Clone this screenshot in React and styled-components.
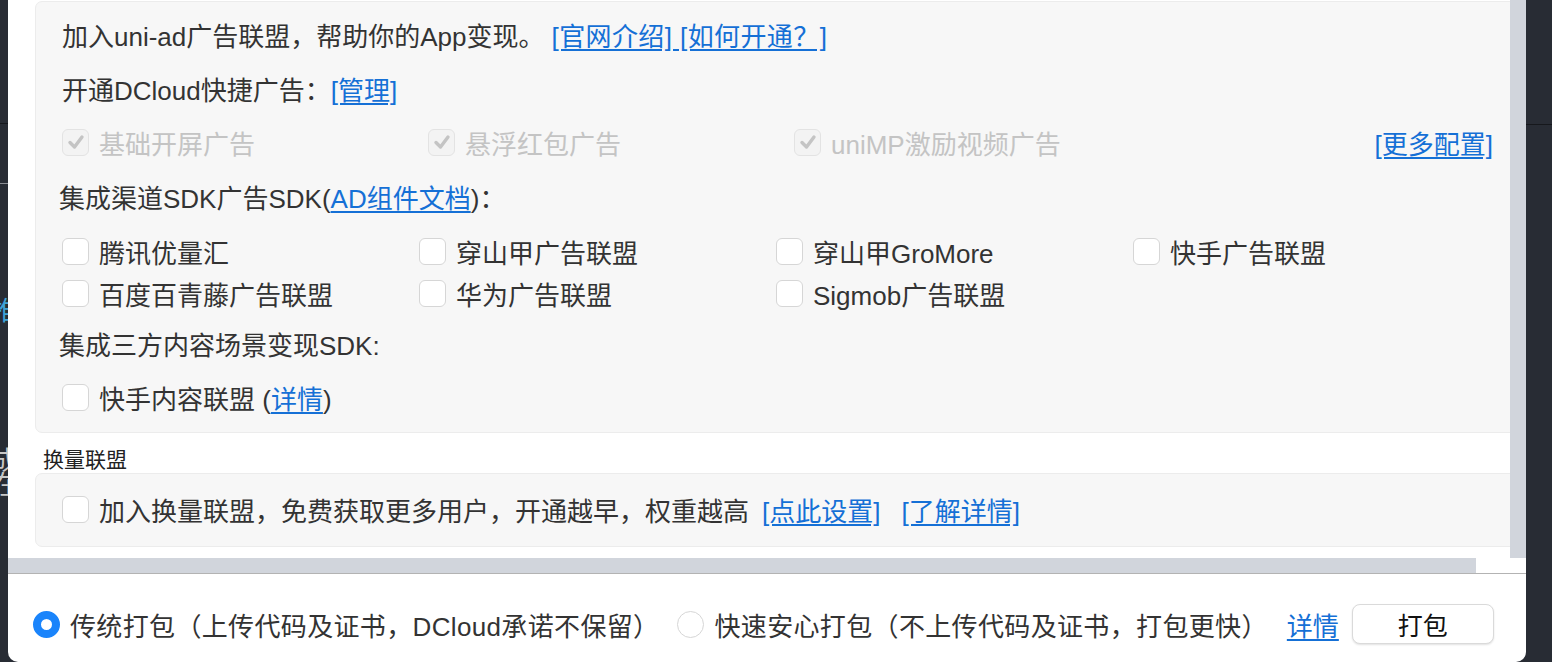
import React from "react";
import styled, { createGlobalStyle } from "styled-components";

const GlobalStyle = createGlobalStyle`
  html, body {
    margin: 0;
    padding: 0;
    background: #282c34;
  }
  body {
    font-family: "Liberation Sans", "Noto Sans CJK SC", sans-serif;
    color: #333;
  }
`;

const LINK = "#1570d6";

function CheckBox({ checked, disabled }) {
  return (
    <Box $disabled={disabled}>
      {checked && (
        <svg width="20" height="20" viewBox="0 0 20 20">
          <path
            d="M4 10.5 L8.5 15 L16 5"
            fill="none"
            stroke="#c4c4c4"
            strokeWidth="3.4"
            strokeLinecap="round"
            strokeLinejoin="round"
          />
        </svg>
      )}
    </Box>
  );
}

function Option({ label, checked, disabled, children }) {
  return (
    <OptionItem $disabled={disabled}>
      <CheckBox checked={checked} disabled={disabled} />
      <span>
        {label}
        {children}
      </span>
    </OptionItem>
  );
}

const sdkList = [
  "腾讯优量汇",
  "穿山甲广告联盟",
  "穿山甲GroMore",
  "快手广告联盟",
  "百度百青藤广告联盟",
  "华为广告联盟",
  "Sigmob广告联盟",
];

function App() {
  return (
    <>
      <GlobalStyle />
      <Page>
        <Strip $width="8px">
          <Rule $top="123px" $color="#16181c" />
          <Rule $top="59px" $color="#8a8d93" />
          <Fragment $top="112px" $color="#3fa2d6">推</Fragment>
          <Fragment $top="120px" $color="#c8c8c8">成</Fragment>
          <Fragment $top="-6px" $color="#c8c8c8">在</Fragment>
        </Strip>

        <Dialog>
          <ScrollFrame>
            <Viewport>
              <Content>
                <Card $top="1px" $pad="5px 36px 8px 26px">
                  <Line>
                    加入uni-ad广告联盟，帮助你的App变现。
                    <IntroLink>[官网介绍] [如何开通？]</IntroLink>
                  </Line>
                  <Line>
                    开通DCloud快捷广告：<Link>[管理]</Link>
                  </Line>
                  <Line>
                    <DisabledCell>
                      <Option label="基础开屏广告" checked disabled />
                    </DisabledCell>
                    <DisabledCell>
                      <Option label="悬浮红包广告" checked disabled />
                    </DisabledCell>
                    <DisabledCell>
                      <Option label="uniMP激励视频广告" checked disabled />
                    </DisabledCell>
                    <MoreLink>[更多配置]</MoreLink>
                  </Line>
                  <Line $shift="-3px">
                    集成渠道SDK广告SDK(<Link>AD组件文档</Link>)：
                  </Line>
                  <SdkGrid>
                    {sdkList.map((name) => (
                      <Option key={name} label={name} />
                    ))}
                  </SdkGrid>
                  <Line $shift="-3px">集成三方内容场景变现SDK:</Line>
                  <Line>
                    <Option label="快手内容联盟 (">
                      <Link>详情</Link>)
                    </Option>
                  </Line>
                </Card>

                <SectionLabel>换量联盟</SectionLabel>
                <Card $top="0" $pad="0 36px 0 26px">
                  <SwapRow>
                    <Option label="加入换量联盟，免费获取更多用户，开通越早，权重越高" />
                    <SwapLinks>
                      <Link>[点此设置]</Link>
                      <Link>[了解详情]</Link>
                    </SwapLinks>
                  </SwapRow>
                </Card>
              </Content>
            </Viewport>
            <VBar />
            <HBar>
              <HThumb />
            </HBar>
            <Corner />
          </ScrollFrame>

          <Footer>
            <PackOption>
              <Radio $on />
              <span>传统打包（上传代码及证书，DCloud承诺不保留）</span>
            </PackOption>
            <PackOption>
              <Radio />
              <span>快速安心打包（不上传代码及证书，打包更快）</span>
            </PackOption>
            <FootLink>详情</FootLink>
            <PackButton>打包</PackButton>
          </Footer>
        </Dialog>

        <Strip $width="26px">
          <Rule $top="124px" $color="#16181c" />
        </Strip>
      </Page>
    </>
  );
}

export default App;

const Page = styled.div`
  display: flex;
  width: 1552px;
  height: 662px;
  overflow: hidden;
  background: #282c34;
`;

const Strip = styled.div`
  flex: 0 0 ${(p) => p.$width};
  display: flex;
  flex-direction: column;
  align-items: flex-end;
  overflow: hidden;
  background: #282c34;
`;

const Rule = styled.div`
  align-self: stretch;
  flex: 0 0 1px;
  margin-top: ${(p) => p.$top};
  background: ${(p) => p.$color};
`;

const Fragment = styled.span`
  display: block;
  margin-top: ${(p) => p.$top};
  margin-right: -10px;
  font-size: 26px;
  line-height: 30px;
  color: ${(p) => p.$color};
  white-space: nowrap;
`;

const Dialog = styled.div`
  flex: 0 0 1518px;
  display: flex;
  flex-direction: column;
  background: #fff;
  border-radius: 0 0 10px 10px;
  overflow: hidden;
`;

const ScrollFrame = styled.div`
  display: grid;
  grid-template-columns: 1fr 16px;
  grid-template-rows: 558px 15px;
  border-bottom: 1px solid #b3b3b3;
`;

const Viewport = styled.div`
  overflow: hidden;
  background: #fff;
`;

const Content = styled.div`
  display: flex;
  flex-direction: column;
  padding-left: 27px;
  width: 1600px;
`;

const Card = styled.div`
  width: 1495px;
  box-sizing: border-box;
  margin-top: ${(p) => p.$top};
  padding: ${(p) => p.$pad};
  background: #f7f7f7;
  border: 1px solid #ececec;
  border-radius: 7px;
`;

const Line = styled.div`
  display: flex;
  align-items: center;
  height: 54px;
  margin-left: ${(p) => p.$shift || "0"};
  font-size: 26px;
  white-space: nowrap;
`;

const Link = styled.a`
  color: ${LINK};
  text-decoration: underline;
  text-underline-offset: 3px;
  cursor: pointer;
`;

const IntroLink = styled(Link)`
  margin-left: 7px;
  letter-spacing: 0.4px;
`;

const MoreLink = styled(Link)`
  margin-left: auto;
`;

const DisabledCell = styled.div`
  width: 366px;
`;

const OptionItem = styled.label`
  display: flex;
  align-items: center;
  gap: 10px;
  font-size: 26px;
  white-space: nowrap;
  color: ${(p) => (p.$disabled ? "#c4c4c4" : "#333")};
`;

const Box = styled.span`
  display: flex;
  align-items: center;
  justify-content: center;
  flex: 0 0 27px;
  height: 27px;
  box-sizing: border-box;
  border: 1px solid ${(p) => (p.$disabled ? "#e3e3e3" : "#d6d6d6")};
  border-radius: 6px;
  background: ${(p) => (p.$disabled ? "#f3f3f3" : "#fff")};
`;

const SdkGrid = styled.div`
  display: grid;
  grid-template-columns: repeat(4, 357px);
  grid-auto-rows: 42px;
  align-items: center;
  margin: 7px 0 2px;
`;

const SectionLabel = styled.div`
  height: 27px;
  margin: 13px 0 0 8px;
  font-size: 21px;
  line-height: 27px;
  color: #222;
`;

const SwapRow = styled.div`
  display: flex;
  align-items: center;
  height: 70px;
  padding-bottom: 2px;
  font-size: 26px;
`;

const SwapLinks = styled.div`
  display: flex;
  gap: 21px;
  margin-left: 13px;
  white-space: nowrap;
`;

const VBar = styled.div`
  background: #d1d5dc;
`;

const HBar = styled.div`
  background: #fff;
`;

const HThumb = styled.div`
  width: 1468px;
  height: 100%;
  background: #d1d5dc;
`;

const Corner = styled.div`
  background: #fff;
`;

const Footer = styled.div`
  flex: 1;
  display: flex;
  align-items: center;
  padding: 12px 0 0 25px;
  font-size: 26px;
  letter-spacing: 0.35px;
  color: #333;
  white-space: nowrap;
`;

const PackOption = styled.label`
  display: flex;
  align-items: center;
  gap: 10px;
  margin-right: 18px;
`;

const Radio = styled.span`
  flex: 0 0 27px;
  height: 27px;
  box-sizing: border-box;
  border-radius: 50%;
  border: ${(p) => (p.$on ? "8px solid #1a84fb" : "1px solid #d6d6d6")};
  background: #fff;
`;

const FootLink = styled(Link)`
  margin-left: 1px;
  letter-spacing: 0;
`;

const PackButton = styled.button`
  width: 142px;
  height: 40px;
  margin-left: 13px;
  background: #fff;
  border: 1px solid #dadada;
  border-radius: 8px;
  box-shadow: 0 1px 2px rgba(0, 0, 0, 0.12);
  font-family: "Liberation Sans", "Noto Sans CJK SC", sans-serif;
  font-size: 25px;
  color: #111;
`;
